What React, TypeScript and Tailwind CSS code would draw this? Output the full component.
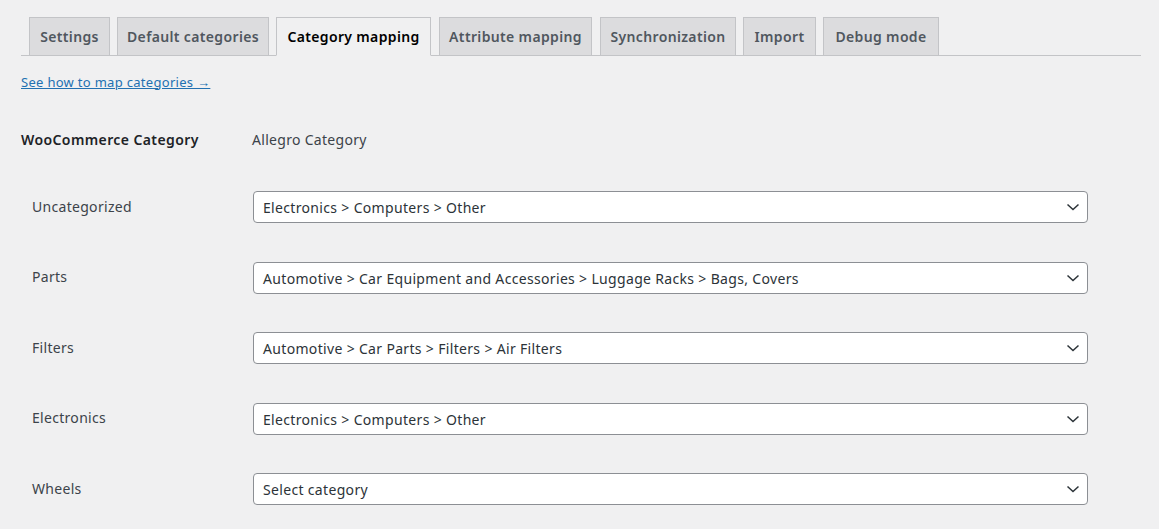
import React from "react";

const tabs = [
  { label: "Settings", w: "w-[81px]", ml: "ml-[8px]" },
  { label: "Default categories", w: "w-[152px]", ml: "ml-[7px]" },
  { label: "Category mapping", w: "w-[155px]", ml: "ml-[7px]", active: true },
  { label: "Attribute mapping", w: "w-[153px]", ml: "ml-[8px]" },
  { label: "Synchronization", w: "w-[136px]", ml: "ml-[8px]" },
  { label: "Import", w: "w-[73px]", ml: "ml-[7px]" },
  { label: "Debug mode", w: "w-[116px]", ml: "ml-[7px]" },
];

const rows = [
  { label: "Uncategorized", value: "Electronics > Computers > Other" },
  { label: "Parts", value: "Automotive > Car Equipment and Accessories > Luggage Racks > Bags, Covers" },
  { label: "Filters", value: "Automotive > Car Parts > Filters > Air Filters" },
  { label: "Electronics", value: "Electronics > Computers > Other" },
  { label: "Wheels", value: "Select category" },
];

function Chevron() {
  return (
    <svg width="16" height="16" viewBox="0 0 16 16" className="shrink-0">
      <path d="M2.5 5.5 L8 10.5 L13.5 5.5" fill="none" stroke="#2c3338" strokeWidth="1.5" />
    </svg>
  );
}

export default function App() {
  return (
    <div
      className="min-h-[529px] w-full bg-[#f0f0f1] pl-[21px] pr-[18px] pt-[17px]"
      style={{ fontFamily: '"Noto Sans", "Open Sans", sans-serif' }}
    >
      <div className="flex border-b border-[#c3c4c7] h-[39px]">
        {tabs.map((t) => (
          <div
            key={t.label}
            className={`${t.w} ${t.ml} h-[39px] flex items-center justify-center border border-[#c3c4c7] text-[14px] font-semibold leading-none whitespace-nowrap tracking-[0.35px] ${
              t.active ? "bg-[#f0f0f1] text-[#000] border-b-[#f0f0f1]" : "bg-[#dcdcde] text-[#50575e]"
            }`}
          >
            {t.label}
          </div>
        ))}
      </div>

      <div className="mt-[17px] h-[18px] flex items-center">
        <a href="#" className="text-[13px] text-[#2271b1] underline leading-none tracking-[0.3px]">
          See how to map categories →
        </a>
      </div>

      <div className="mt-[38px] flex items-center h-[20px] text-[14px] text-[#1d2327]">
        <div className="w-[231px] font-semibold tracking-[0.4px]">WooCommerce Category</div>
        <div className="text-[#3c434a] tracking-[0.3px]">Allegro Category</div>
      </div>

      <div className="mt-[42px] w-[1067px]">
        {rows.map((r, i) => (
          <div key={r.label} className={`flex items-center ${i === 0 ? "" : "mt-[38.5px]"}`}>
            <div className="w-[232px] pl-[11px] text-[14px] text-[#3c434a] -mt-[2px] tracking-[0.3px]">{r.label}</div>
            <div className="flex-1 h-[32px] bg-white border border-[#8c8f94] rounded-[4px] flex items-center justify-between pl-[9px] pr-[6px] text-[14px] text-[#2c3338]">
              <span className="tracking-[0.33px] whitespace-nowrap mt-[1px]">{r.value}</span>
              <Chevron />
            </div>
          </div>
        ))}
      </div>
    </div>
  );
}
